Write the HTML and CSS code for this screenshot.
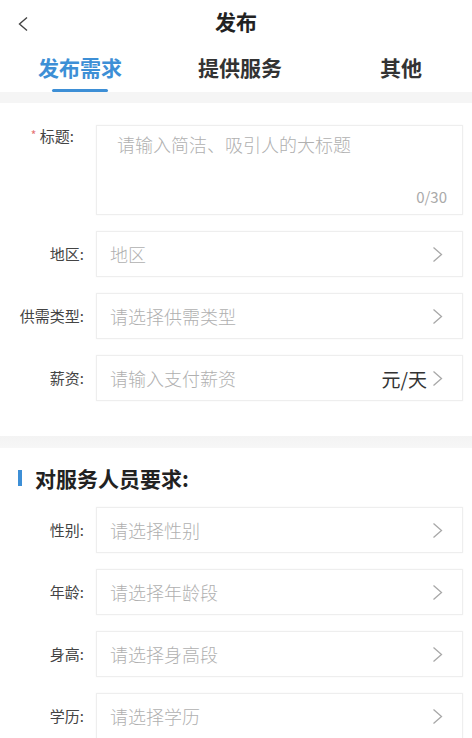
FILE: index.html
```html
<!DOCTYPE html>
<html lang="zh-CN">
<head>
<meta charset="utf-8">
<title>发布</title>
<link rel="stylesheet" href="styles.css">
</head>
<body>
<div class="header">
  <div class="back">
    <svg width="12" height="16" viewBox="0 0 12 16"><path d="M10 1.5 L2.5 8 L10 14.5" fill="none" stroke="#444" stroke-width="1.4"/></svg>
  </div>
  <div class="title">发布</div>
  <div></div>
</div>
<div class="tabs">
  <div class="tab active">发布需求</div>
  <div class="tab">提供服务</div>
  <div class="tab tab-last">其他</div>
</div>
<div class="band"></div>

<div class="form">
  <div class="row row-top">
    <div class="label label-title"><span class="star">*</span> 标题:</div>
    <div class="box box-area">
      <div class="ph">请输入简洁、吸引人的大标题</div>
      <div class="count">0/30</div>
    </div>
  </div>
  <div class="row">
    <div class="label">地区:</div>
    <div class="box"><div class="ph">地区</div><svg class="chev" width="11" height="17" viewBox="0 0 11 17"><path d="M1.5 1.5 L9.5 8.5 L1.5 15.5" fill="none" stroke="#a8a8a8" stroke-width="1.3"/></svg></div>
  </div>
  <div class="row">
    <div class="label">供需类型:</div>
    <div class="box"><div class="ph">请选择供需类型</div><svg class="chev" width="11" height="17" viewBox="0 0 11 17"><path d="M1.5 1.5 L9.5 8.5 L1.5 15.5" fill="none" stroke="#a8a8a8" stroke-width="1.3"/></svg></div>
  </div>
  <div class="row">
    <div class="label">薪资:</div>
    <div class="box"><div class="ph">请输入支付薪资</div><span class="unit">元/天</span><svg class="chev" width="11" height="17" viewBox="0 0 11 17"><path d="M1.5 1.5 L9.5 8.5 L1.5 15.5" fill="none" stroke="#a8a8a8" stroke-width="1.3"/></svg></div>
  </div>
</div>

<div class="band band-2"></div>

<div class="sec-title"><span class="bar"></span>对服务人员要求:</div>

<div class="form form-2">
  <div class="row">
    <div class="label">性别:</div>
    <div class="box"><div class="ph">请选择性别</div><svg class="chev" width="11" height="17" viewBox="0 0 11 17"><path d="M1.5 1.5 L9.5 8.5 L1.5 15.5" fill="none" stroke="#a8a8a8" stroke-width="1.3"/></svg></div>
  </div>
  <div class="row">
    <div class="label">年龄:</div>
    <div class="box"><div class="ph">请选择年龄段</div><svg class="chev" width="11" height="17" viewBox="0 0 11 17"><path d="M1.5 1.5 L9.5 8.5 L1.5 15.5" fill="none" stroke="#a8a8a8" stroke-width="1.3"/></svg></div>
  </div>
  <div class="row">
    <div class="label">身高:</div>
    <div class="box"><div class="ph">请选择身高段</div><svg class="chev" width="11" height="17" viewBox="0 0 11 17"><path d="M1.5 1.5 L9.5 8.5 L1.5 15.5" fill="none" stroke="#a8a8a8" stroke-width="1.3"/></svg></div>
  </div>
  <div class="row">
    <div class="label">学历:</div>
    <div class="box"><div class="ph">请选择学历</div><svg class="chev" width="11" height="17" viewBox="0 0 11 17"><path d="M1.5 1.5 L9.5 8.5 L1.5 15.5" fill="none" stroke="#a8a8a8" stroke-width="1.3"/></svg></div>
  </div>
</div>
</body>
</html>
```
FILE: styles.css
```css
html, body {
  margin: 0;
  padding: 0;
  background: #ffffff;
}
body {
  width: 472px;
  overflow: hidden;
  font-family: "Noto Sans CJK SC", "Noto Sans", sans-serif;
  color: #333;
}
.header {
  display: grid;
  grid-template-columns: 48px 1fr 48px;
  height: 42px;
  align-items: center;
}
.back {
  padding-left: 17px;
  padding-top: 6px;
  display: flex;
}
.title {
  text-align: center;
  font-size: 21px;
  font-weight: 600;
  color: #222;
  line-height: 1;
}
.tabs {
  display: grid;
  grid-template-columns: 160px 160px 152px;
  height: 50px;
}
.tab {
  display: flex;
  flex-direction: column;
  align-items: center;
  padding-top: 14px;
  font-size: 21px;
  line-height: 22px;
  font-weight: 600;
  color: #333;
}
.tab-last {
  padding-left: 10px;
}
.tab.active {
  color: #3d8fd6;
}
.tab.active::after {
  content: "";
  display: block;
  width: 56px;
  height: 3px;
  margin-top: 11px;
  border-radius: 2px;
  background: #3d8fd6;
}
.band {
  height: 11px;
  background: #f5f5f5;
}
.band-2 {
  height: 12px;
  background: linear-gradient(#f3f3f3, #f7f7f7);
}
.form {
  display: flex;
  flex-direction: column;
  gap: 16px;
  padding: 22px 9px 35px 0;
}
.form-2 {
  padding-top: 0;
  padding-bottom: 0;
}
.row {
  display: flex;
  align-items: center;
}
.row-top {
  align-items: flex-start;
}
.label {
  width: 84px;
  flex-shrink: 0;
  margin-right: 12px;
  text-align: right;
  font-size: 15px;
  line-height: 20px;
  color: #444;
  white-space: nowrap;
}
.label-title {
  box-sizing: border-box;
  padding-right: 10px;
  padding-top: 0;
}
.star {
  color: #e57373;
  font-size: 12px;
  vertical-align: 2px;
}
.box {
  flex: 1;
  box-sizing: border-box;
  height: 46px;
  display: flex;
  align-items: center;
  padding: 0 19px 0 13px;
  border: 1px solid #eeeeee;
  box-shadow: 0 0 2px rgba(0, 0, 0, 0.04);
  background: #fff;
}
.box-area {
  height: 90px;
  flex-direction: column;
  align-items: stretch;
  justify-content: space-between;
  padding: 6px 15px 7px 20px;
}
.ph {
  flex: 1;
  font-size: 18px;
  line-height: 24px;
  color: #b0b0b0;
  font-weight: 300;
}
.box-area .ph {
  flex: none;
}
.count {
  text-align: right;
  font-size: 15px;
  line-height: 20px;
  color: #aaa;
}
.unit {
  font-size: 19px;
  color: #333;
  margin-right: 5px;
}
.chev {
  flex-shrink: 0;
  display: block;
}
.sec-title {
  height: 59px;
  display: flex;
  align-items: center;
  padding-left: 18px;
  font-size: 21px;
  font-weight: 600;
  color: #222;
}
.bar {
  width: 4px;
  height: 16px;
  background: #3d8fd6;
  margin-right: 13px;
}
```
